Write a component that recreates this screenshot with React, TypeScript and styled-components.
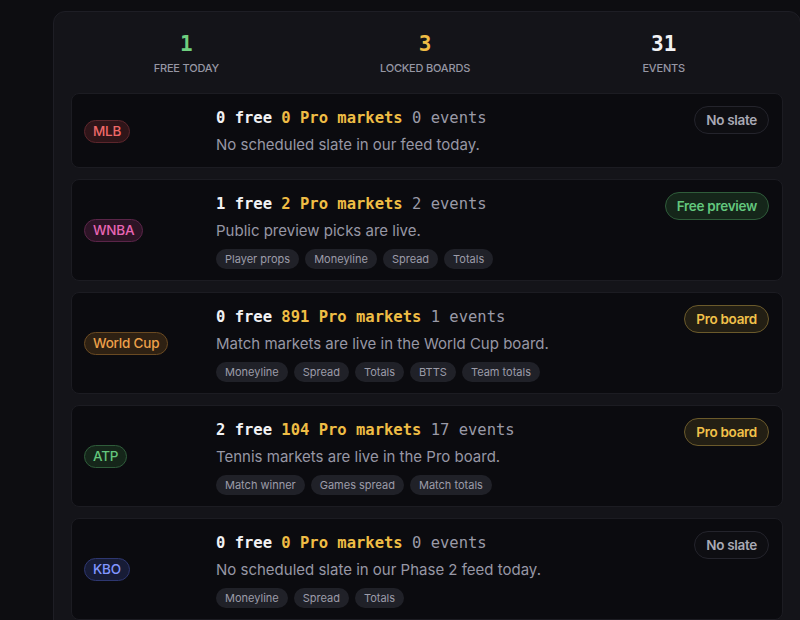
import React from 'react';
import styled, { createGlobalStyle } from 'styled-components';

const GlobalStyle = createGlobalStyle`
  html, body {
    margin: 0;
    padding: 0;
    background: #0d0d11;
    overflow: hidden;
  }
  *, *::before, *::after {
    box-sizing: border-box;
  }
  body {
    font-family: Inter, "Noto Sans", sans-serif;
    -webkit-font-smoothing: antialiased;
  }
`;

type Tone = 'red' | 'pink' | 'orange' | 'green' | 'blue' | 'gold' | 'muted';

const tones: Record<Tone, { fg: string; bg: string; border: string }> = {
  red: { fg: '#ee6868', bg: '#2f1519', border: '#5c262c' },
  pink: { fg: '#e865b4', bg: '#2d1426', border: '#5a2548' },
  orange: { fg: '#eda04a', bg: '#2e2113', border: '#6a4a22' },
  green: { fg: '#63c77d', bg: '#15261a', border: '#2f5c3a' },
  blue: { fg: '#8196ff', bg: '#171c36', border: '#2e3770' },
  gold: { fg: '#f1c14a', bg: '#231f14', border: '#6b5a2b' },
  muted: { fg: '#a9a9b5', bg: '#0e0e12', border: '#24242c' },
};

const Page = styled.div`
  padding: 11px 0 0 53px;
  height: 620px;
`;

const Panel = styled.section`
  width: 748px;
  min-height: 700px;
  background: #141419;
  border: 1px solid #1e1e25;
  border-radius: 12px;
  padding: 19px 17px 17px 17px;
`;

const Stats = styled.div`
  display: grid;
  grid-template-columns: repeat(3, 1fr);
  gap: 8px;
  margin-bottom: 18px;
  padding-right: 4px;
`;

const Stat = styled.div`
  display: flex;
  flex-direction: column;
  align-items: center;
  gap: 4px;
`;

const StatValue = styled.div<{ $color: string }>`
  font-family: "DejaVu Sans Mono", monospace;
  font-weight: 700;
  font-size: 21px;
  line-height: 26px;
  color: ${(p) => p.$color};
`;

const StatLabel = styled.div`
  font-size: 11px;
  line-height: 14px;
  font-weight: 500;
  letter-spacing: -0.2px;
  text-transform: uppercase;
  color: #9797a4;
`;

const List = styled.div`
  display: flex;
  flex-direction: column;
  gap: 11px;
`;

const Card = styled.article`
  display: grid;
  grid-template-columns: 120px 1fr auto;
  column-gap: 12px;
  background: #0b0b0f;
  border: 1px solid #1c1c22;
  border-radius: 8px;
  padding: 12px 13px 11px 12px;
`;

const LeagueCell = styled.div`
  display: flex;
  align-items: center;
`;

const League = styled.span<{ $tone: Tone }>`
  display: inline-block;
  font-size: 13.5px;
  font-weight: 500;
  line-height: 17px;
  padding: 2px 8px;
  border-radius: 999px;
  letter-spacing: -0.2px;
  color: ${(p) => tones[p.$tone].fg};
  background: ${(p) => tones[p.$tone].bg};
  border: 1px solid ${(p) => tones[p.$tone].border};
`;

const Body = styled.div`
  display: flex;
  flex-direction: column;
  min-width: 0;
`;

const Headline = styled.div`
  font-family: "DejaVu Sans Mono", monospace;
  font-size: 15.5px;
  line-height: 24px;
  white-space: nowrap;
`;

const Free = styled.span`
  color: #f2f2f4;
  font-weight: 700;
`;

const Pro = styled.span`
  color: #efbd45;
  font-weight: 700;
`;

const Events = styled.span`
  color: #9a9aa7;
`;

const Desc = styled.p`
  margin: 4px 0 0;
  font-size: 15px;
  line-height: 22px;
  color: #9797a5;
`;

const Tags = styled.div`
  display: flex;
  flex-wrap: wrap;
  gap: 6px;
  margin-top: 7px;
`;

const Tag = styled.span`
  font-size: 11px;
  line-height: 20px;
  height: 20px;
  padding: 0 9px;
  border-radius: 999px;
  background: #202128;
  color: #9c9ca9;
`;

const Status = styled.span<{ $tone: Tone }>`
  align-self: start;
  font-size: 13.5px;
  font-weight: 600;
  line-height: 18px;
  padding: 4px 11px;
  border-radius: 999px;
  letter-spacing: -0.3px;
  white-space: nowrap;
  color: ${(p) => tones[p.$tone].fg};
  background: ${(p) => tones[p.$tone].bg};
  border: 1px solid ${(p) => tones[p.$tone].border};
`;

interface Board {
  league: string;
  tone: Tone;
  free: number;
  pro: number;
  events: number;
  desc: string;
  tags: string[];
  status: string;
  statusTone: Tone;
}

const boards: Board[] = [
  {
    league: 'MLB',
    tone: 'red',
    free: 0,
    pro: 0,
    events: 0,
    desc: 'No scheduled slate in our feed today.',
    tags: [],
    status: 'No slate',
    statusTone: 'muted',
  },
  {
    league: 'WNBA',
    tone: 'pink',
    free: 1,
    pro: 2,
    events: 2,
    desc: 'Public preview picks are live.',
    tags: ['Player props', 'Moneyline', 'Spread', 'Totals'],
    status: 'Free preview',
    statusTone: 'green',
  },
  {
    league: 'World Cup',
    tone: 'orange',
    free: 0,
    pro: 891,
    events: 1,
    desc: 'Match markets are live in the World Cup board.',
    tags: ['Moneyline', 'Spread', 'Totals', 'BTTS', 'Team totals'],
    status: 'Pro board',
    statusTone: 'gold',
  },
  {
    league: 'ATP',
    tone: 'green',
    free: 2,
    pro: 104,
    events: 17,
    desc: 'Tennis markets are live in the Pro board.',
    tags: ['Match winner', 'Games spread', 'Match totals'],
    status: 'Pro board',
    statusTone: 'gold',
  },
  {
    league: 'KBO',
    tone: 'blue',
    free: 0,
    pro: 0,
    events: 0,
    desc: 'No scheduled slate in our Phase 2 feed today.',
    tags: ['Moneyline', 'Spread', 'Totals'],
    status: 'No slate',
    statusTone: 'muted',
  },
];

const BoardCard: React.FC<{ board: Board }> = ({ board }) => (
  <Card>
    <LeagueCell>
      <League $tone={board.tone}>{board.league}</League>
    </LeagueCell>
    <Body>
      <Headline>
        <Free>{board.free} free</Free> <Pro>{board.pro} Pro markets</Pro>{' '}
        <Events>{board.events} events</Events>
      </Headline>
      <Desc>{board.desc}</Desc>
      {board.tags.length > 0 && (
        <Tags>
          {board.tags.map((t) => (
            <Tag key={t}>{t}</Tag>
          ))}
        </Tags>
      )}
    </Body>
    <Status $tone={board.statusTone}>{board.status}</Status>
  </Card>
);

export default function App() {
  return (
    <>
      <GlobalStyle />
      <Page>
        <Panel>
          <Stats>
            <Stat>
              <StatValue $color="#6fcf7f">1</StatValue>
              <StatLabel>Free today</StatLabel>
            </Stat>
            <Stat>
              <StatValue $color="#efbd45">3</StatValue>
              <StatLabel>Locked boards</StatLabel>
            </Stat>
            <Stat>
              <StatValue $color="#f2f2f4">31</StatValue>
              <StatLabel>Events</StatLabel>
            </Stat>
          </Stats>
          <List>
            {boards.map((b) => (
              <BoardCard key={b.league} board={b} />
            ))}
          </List>
        </Panel>
      </Page>
    </>
  );
}
